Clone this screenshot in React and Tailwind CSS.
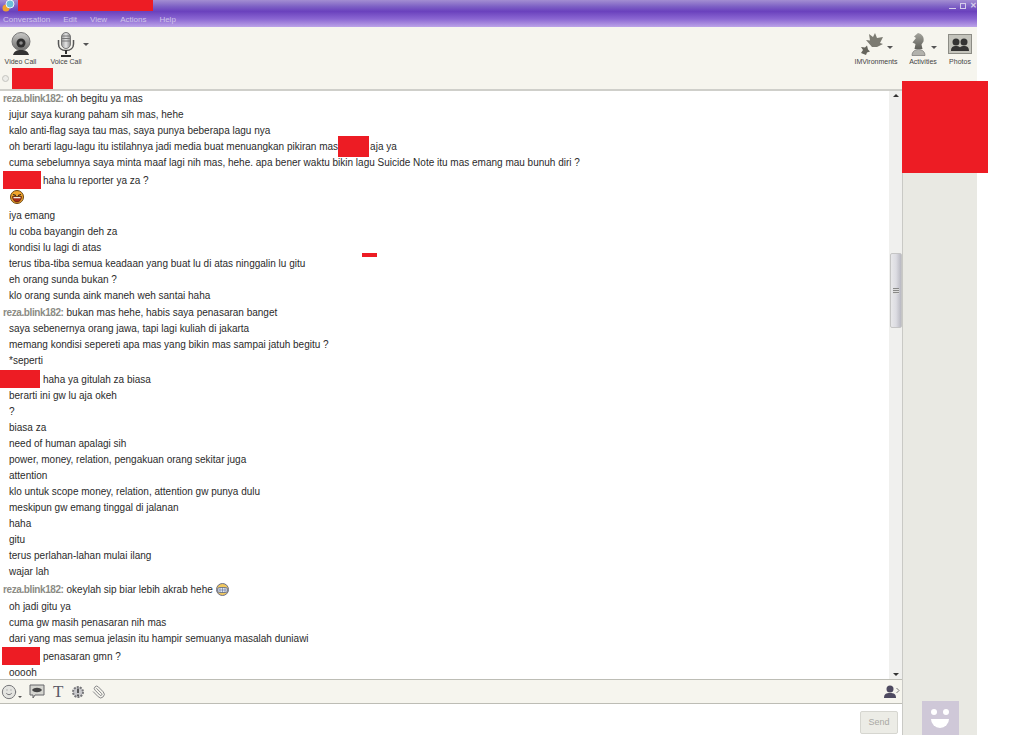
import { Smile, Paperclip } from 'lucide-react';

const rows = [
  { name: 'reza.blink182:', text: 'oh begitu ya mas' },
  { text: 'jujur saya kurang paham sih mas, hehe' },
  { text: 'kalo anti-flag saya tau mas, saya punya beberapa lagu nya' },
  { text: 'oh berarti lagu-lagu itu istilahnya jadi media buat menuangkan pikiran mas', mask: 'aja ya' },
  { text: 'cuma sebelumnya saya minta maaf lagi nih mas, hehe. apa bener waktu bikin lagu Suicide Note itu mas emang mau bunuh diri ?' },
  { red: 'ml-[3px] mr-[2px] w-[38px]', text: 'haha lu reporter ya za ?', gap: 'mt-[2px]' },
  { emoji: 'laugh', gap: 'mt-[1px]' },
  { text: 'iya emang', gap: 'mt-[2px]' },
  { text: 'lu coba bayangin deh za' },
  { text: 'kondisi lu lagi di atas' },
  { text: 'terus tiba-tiba semua keadaan yang buat lu di atas ninggalin lu gitu' },
  { text: 'eh orang sunda bukan ?' },
  { text: 'klo orang sunda aink maneh weh santai haha' },
  { name: 'reza.blink182:', text: 'bukan mas hehe, habis saya penasaran banget', gap: 'mt-[1px]' },
  { text: 'saya sebenernya orang jawa, tapi lagi kuliah di jakarta' },
  { text: 'memang kondisi sepereti apa mas yang bikin mas sampai jatuh begitu ?' },
  { text: '*seperti' },
  { red: 'mr-[3px] w-[40px]', text: 'haha ya gitulah za biasa', gap: 'mt-[3px]' },
  { text: 'berarti ini gw lu aja okeh' },
  { text: '?' },
  { text: 'biasa za' },
  { text: 'need of human apalagi sih' },
  { text: 'power, money, relation, pengakuan orang sekitar juga' },
  { text: 'attention' },
  { text: 'klo untuk scope money, relation, attention gw punya dulu' },
  { text: 'meskipun gw emang tinggal di jalanan' },
  { text: 'haha' },
  { text: 'gitu' },
  { text: 'terus perlahan-lahan mulai ilang' },
  { text: 'wajar lah' },
  { name: 'reza.blink182:', text: 'okeylah sip biar lebih akrab hehe', emoji: 'grin', gap: 'mt-[2px]' },
  { text: 'oh jadi gitu ya', gap: 'mt-[1px]' },
  { text: 'cuma gw masih penasaran nih mas' },
  { text: 'dari yang mas semua jelasin itu hampir semuanya masalah duniawi' },
  { red: 'ml-[2px] mr-[3px] w-[38px]', text: 'penasaran gmn ?', gap: 'mt-[2px]' },
  { text: 'ooooh' },
];

function Laugh() {
  return (
    <svg width="14" height="14" viewBox="0 0 14 14">
      <circle cx="7" cy="7" r="6.500" fill="#f2a52c" stroke="#6b4614" />
      <path d="M3 4.500l3 1M11 4.500l-3 1" stroke="#222" strokeWidth="1.200" />
      <path d="M2.500 6.500h9c0 3.500-2.200 5.500-4.500 5.500s-4.500-2-4.500-5.500z" fill="#a52a1a" stroke="#3a1a08" strokeWidth="0.600" />
      <path d="M3.500 7h7v1.300h-7z" fill="#f4f0e8" />
    </svg>
  );
}

function Grin() {
  return (
    <svg width="13" height="13" viewBox="0 0 13 13">
      <circle cx="6.500" cy="6.500" r="6" fill="#f0c860" stroke="#6b6f8a" />
      <rect x="1.500" y="4.500" width="10" height="5" rx="2" fill="#dfe6f2" stroke="#4c5a80" strokeWidth="0.700" />
      <path d="M4 4.500v5M6.500 4.500v5M9 4.500v5M1.500 7h10" stroke="#4c5a80" strokeWidth="0.500" />
    </svg>
  );
}

function Row({ r }) {
  return (
    <div className={`flex h-4 items-center whitespace-nowrap ${r.gap || ''}`}>
      {r.name && <span className="mr-[3px] pl-[3px] font-bold tracking-[-0.4px] text-[#8b8b84]">{r.name}</span>}
      {r.red && <span className={`h-[18px] shrink-0 bg-[#ed1c24] ${r.red}`} />}
      {!r.name && !r.red && <span className="w-[9px] shrink-0" />}
      {r.text && <span>{r.text}</span>}
      {r.mask && <span className="mr-px h-[21px] w-[31px] shrink-0 bg-[#ed1c24]" />}
      {r.mask && <span>{r.mask}</span>}
      {r.emoji === 'laugh' && <span className="flex h-4 items-center pl-px"><Laugh /></span>}
      {r.emoji === 'grin' && <span className="ml-[3px] flex items-center"><Grin /></span>}
    </div>
  );
}

function ToolButton({ label, width, children, caret }) {
  return (
    <div className={`flex shrink-0 flex-col items-center ${width}`}>
      <div className="flex h-[26px] items-center">
        {children}
        {caret && <span className={`h-0 w-0 border-x-[3px] border-t-[3px] border-x-transparent border-t-[#555] ${caret}`} />}
      </div>
      <span className="text-[7px] leading-[9px] text-[#444]">{label}</span>
    </div>
  );
}

export default function App() {
  return (
    <div className="relative h-[735px] w-[1023px] overflow-hidden bg-white font-['Liberation_Sans',sans-serif] text-[10px] text-[#2b2b2b]">
      <div className="flex h-full w-[977px] flex-col">
        {/* title bar */}
        <header className="h-[27px] shrink-0 bg-[linear-gradient(#a38ed2_0%,#7c5fc4_25%,#6a41bd_42%,#8a66d2_70%,#bca3e8_100%)]">
          <div className="flex h-[12px] items-start justify-between">
            <svg width="14" height="12" viewBox="0 0 14 12" className="ml-[1px]">
              <circle cx="5" cy="8" r="3.500" fill="#f0a030" />
              <circle cx="9" cy="4" r="4" fill="#6cc0d8" stroke="#e8f4f8" />
            </svg>
            <div className="flex items-center gap-[4px] pt-[2px] text-[#d6cdea]">
              <span className="mt-[5px] h-px w-[7px] bg-[#d6cdea]" />
              <span className="h-[6px] w-[6px] border border-[#d6cdea]" />
              <span className="text-[8px] leading-[7px] font-bold">✕</span>
            </div>
          </div>
          <nav className="flex h-[15px] items-center gap-[13px] pl-[3px] text-[8px] text-[#cfc4e8]">
            <span>Conversation</span>
            <span>Edit</span>
            <span>View</span>
            <span>Actions</span>
            <span>Help</span>
          </nav>
        </header>

        {/* top toolbar */}
        <div className="flex h-[64px] shrink-0 flex-col border-b-2 border-[#cfcfca] bg-[#f6f5ee]">
          <div className="flex h-[41px] items-start justify-between pt-[4px]">
            <div className="flex">
              <ToolButton label="Video Call" width="w-[41px]">
                <svg width="22" height="24" viewBox="0 0 22 24">
                  <defs>
                    <linearGradient id="cam" x1="0" y1="0" x2="0" y2="1">
                      <stop offset="0" stopColor="#c9c9c7" />
                      <stop offset="1" stopColor="#6e6e6c" />
                    </linearGradient>
                  </defs>
                  <circle cx="11" cy="9.500" r="9" fill="url(#cam)" stroke="#777" />
                  <circle cx="11" cy="11" r="4.500" fill="#2e2e2e" />
                  <circle cx="11" cy="11" r="1.800" fill="#8a8a8a" />
                  <path d="M3 23c1-4 4-5 8-5s7 1 8 5z" fill="#333" />
                </svg>
              </ToolButton>
              <ToolButton label="Voice Call" width="w-[50px]" caret="-mr-[13px] ml-[7px]">
                <svg width="20" height="25" viewBox="0 0 20 25">
                  <defs>
                    <linearGradient id="mic" x1="0" y1="0" x2="1" y2="0">
                      <stop offset="0" stopColor="#999" />
                      <stop offset="0.500" stopColor="#e4e4e4" />
                      <stop offset="1" stopColor="#8a8a8a" />
                    </linearGradient>
                  </defs>
                  <rect x="5.500" y="0.500" width="9" height="16" rx="4.500" fill="url(#mic)" stroke="#777" />
                  <path d="M6 4h8M6 6.500h8M6 9h8" stroke="#777" />
                  <path d="M2.500 8v4c0 4 3 6.500 7.500 6.500s7.500-2.500 7.500-6.500V8" fill="none" stroke="#555" strokeWidth="1.500" />
                  <path d="M10 18v4M5 24h10" stroke="#2e2e2e" strokeWidth="2" />
                </svg>
              </ToolButton>
            </div>
            <div className="flex">
              <ToolButton label="IMVironments" width="w-[50px] mr-[2px]" caret="ml-[2px] mt-[6px]">
                <svg width="26" height="24" viewBox="0 0 26 24">
                  <path d="M13 15L7 8l4 .5L10 2l4 3 2-4 2 5 6-1-3 6 3 1-6 3z" fill="#7c7b72" />
                  <path d="M7 23l-5-2 2-3-2-3 4 .5 2-2 1 4 2 2-3 1z" fill="#66655d" />
                </svg>
              </ToolButton>
              <ToolButton label="Activities" width="w-[40px]" caret="ml-[4px] mt-[6px]">
                <svg width="17" height="24" viewBox="0 0 17 24">
                  <defs>
                    <linearGradient id="kn" x1="0" y1="0" x2="0" y2="1">
                      <stop offset="0" stopColor="#a5a59e" />
                      <stop offset="1" stopColor="#5e5e58" />
                    </linearGradient>
                  </defs>
                  <path d="M8 1c4 1 6.500 4 5.500 8.500l-2 3 1 4.500h-8l1-5-3-1.500L6 6 4 4.500z" fill="url(#kn)" />
                  <path d="M2 23.500c0-3.500 2.500-6 6.500-6s6.500 2.500 6.500 6z" fill="#b2b2ac" stroke="#666" strokeWidth="0.600" />
                </svg>
              </ToolButton>
              <ToolButton label="Photos" width="w-[34px]">
                <svg width="24" height="20" viewBox="0 0 24 20">
                  <rect x="0.500" y="0.500" width="23" height="19" fill="#c4c4bc" stroke="#8c8c85" />
                  <circle cx="8" cy="8" r="3.500" fill="#333" />
                  <circle cx="16" cy="8" r="3.500" fill="#333" />
                  <path d="M3 17c0-4 2-5 5-5s5 1 5 5zM11 17c0-4 2-5 5-5s5 1 5 5z" fill="#333" />
                </svg>
              </ToolButton>
            </div>
          </div>
          <div className="flex h-[21px] items-center pl-[2px]">
            <span className="h-[7px] w-[7px] rounded-full border border-[#c4c4bf] bg-[#ecece8]" />
            <span className="ml-[3px] h-[21px] w-[41px] bg-[#ed1c24]" />
          </div>
        </div>

        <div className="flex min-h-0 flex-1">
          <div className="flex min-w-0 flex-1 flex-col">
            {/* chat log */}
            <div className="flex min-h-0 flex-1">
              <div className="min-w-0 flex-1 overflow-hidden">
                <div className="-mt-px">
                  {rows.map((r, i) => <Row r={r} key={i} />)}
                </div>
              </div>
              <div className="flex w-[13px] shrink-0 flex-col items-center bg-[#f0f0ee]">
                <span className="mt-[3px] h-0 w-0 border-x-[3px] border-b-[3px] border-x-transparent border-b-[#333]" />
                <div className="mt-[156px] flex h-[75px] w-[12px] items-center justify-center rounded-[2px] border border-[#c5c5c5] bg-[linear-gradient(90deg,#e8e8ea,#dcdce2,#b9b9c2)]">
                  <span className="h-[6px] w-[6px] bg-[repeating-linear-gradient(#888_0_1px,#ddd_1px_2px)]" />
                </div>
                <span className="mt-auto mb-[3px] h-0 w-0 border-x-[3px] border-t-[3px] border-x-transparent border-t-[#333]" />
              </div>
            </div>

            {/* format bar */}
            <div className="flex h-[25px] shrink-0 items-center border-y border-[#bdbdb5] bg-[#f6f5ee] text-[#77777a]">
              <Smile size={16} strokeWidth={1.500} className="ml-[1px] fill-[#e4e4e0]" />
              <span className="mt-[11px] ml-[1px] mr-[7px] h-0 w-0 border-x-[2px] border-t-[2px] border-x-transparent border-t-[#555]" />
              <svg width="16" height="15" viewBox="0 0 16 15" className="mr-[8px]">
                <path d="M1 1h14v10H6l-2 3v-3H1z" fill="#d5d5d0" stroke="#66666a" />
                <path d="M3 6c2-3 8-3 10 0-2 3-8 3-10 0z" fill="#444" />
              </svg>
              <span className="mr-[7px] w-[11px] font-['Liberation_Serif',serif] text-[17px] leading-none text-[#5a5a68]">T</span>
              <svg width="14" height="14" viewBox="0 0 14 14" className="mr-[7px]">
                <circle cx="7" cy="7" r="5" fill="#c9c9cc" stroke="#77777a" strokeWidth="2" strokeDasharray="2 1.100" />
                <path d="M7 3.500v4.500M7 9.500v1.500" stroke="#333" strokeWidth="1.500" />
              </svg>
              <Paperclip size={14} strokeWidth={1.500} className="-scale-x-100" />
              <svg width="17" height="14" viewBox="0 0 17 14" className="mr-[2px] ml-auto">
                <circle cx="7" cy="4" r="3.500" fill="#4e4a60" />
                <path d="M1 13c0-4 2-5 6-5s6 1 6 5z" fill="#4e4a60" />
                <path d="M13.500 3l2.500 2.500-2.500 2.500" fill="none" stroke="#777" />
              </svg>
            </div>

            {/* input */}
            <div className="flex h-[31px] shrink-0 items-start justify-end pt-[7px] pr-[4px]">
              <div className="flex h-[23px] w-[38px] items-center justify-center rounded-[2px] border border-[#d6d6d0] bg-[#ecece6] text-[9px] text-[#a9a9a4]">Send</div>
            </div>
          </div>

          {/* side panel */}
          <aside className="flex w-[75px] shrink-0 flex-col items-center justify-end border-l border-[#c9c9c5] bg-[#e9e9e3]">
            <div className="flex h-[34px] w-[37px] shrink-0 flex-col items-center bg-[#cfc8d8] pt-[8px]">
              <div className="flex gap-[6px]">
                <span className="h-[6px] w-[6px] rounded-full bg-white" />
                <span className="h-[6px] w-[6px] rounded-full bg-white" />
              </div>
              <span className="mt-[4px] h-[9px] w-[18px] rounded-b-full bg-white" />
            </div>
          </aside>
        </div>
      </div>

      {/* redaction overlays */}
      <span className="absolute top-0 left-[18px] h-[11px] w-[135px] bg-[#ed1c24]" />
      <span className="absolute top-[81px] left-[902px] h-[92px] w-[86px] bg-[#ed1c24]" />
      <span className="absolute top-[253px] left-[362px] h-[4px] w-[15px] bg-[#ed1c24]" />
    </div>
  );
}
